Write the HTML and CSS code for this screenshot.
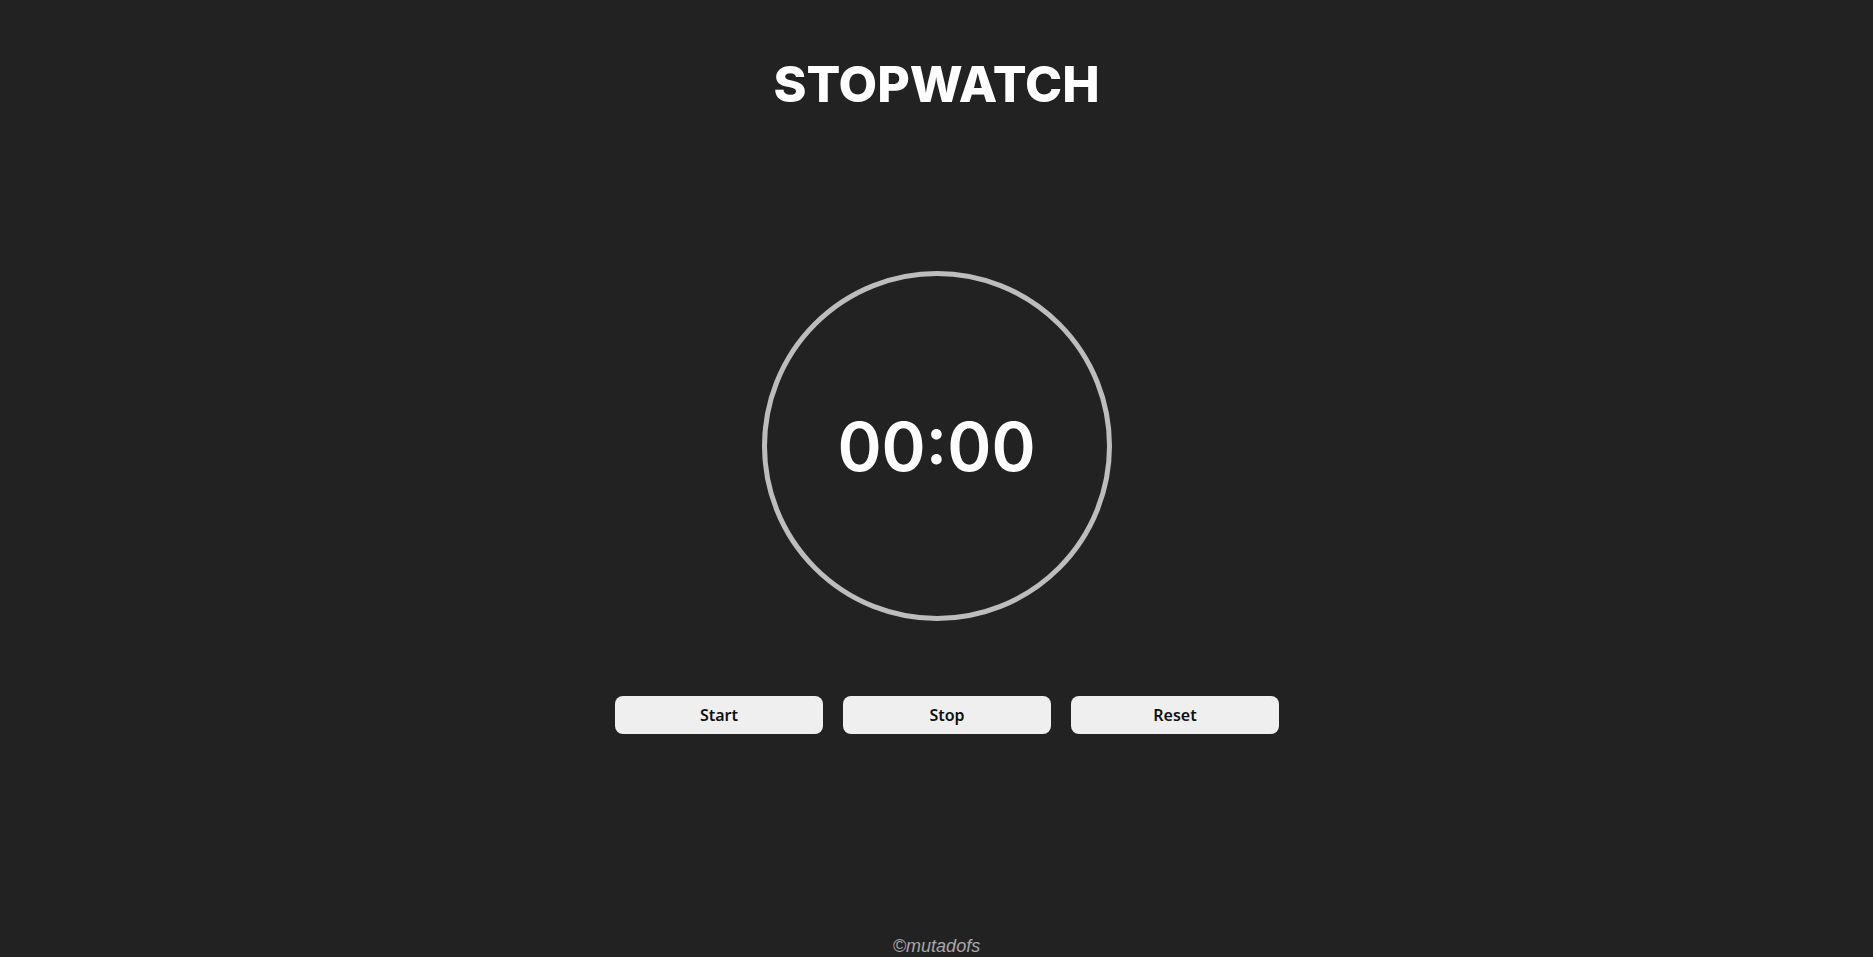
FILE: index.html
```html
<!DOCTYPE html>
<html lang="en">
<head>
<meta charset="utf-8">
<title>Stopwatch</title>
<link rel="stylesheet" href="styles.css">
</head>
<body>
<main class="app">
  <h1 class="title">STOPWATCH</h1>
  <div class="dial"><span class="time">00:00</span></div>
  <div class="controls">
    <button class="btn">Start</button>
    <button class="btn">Stop</button>
    <button class="btn">Reset</button>
  </div>
</main>
<footer class="credit">©mutadofs</footer>
</body>
</html>
```

FILE: styles.css
```css
html, body {
  margin: 0;
  padding: 0;
}
body {
  background: #222222;
  height: 100vh;
  overflow: hidden;
  display: flex;
  flex-direction: column;
  align-items: center;
}
.app {
  display: flex;
  flex-direction: column;
  align-items: center;
}
.title {
  margin: 54px 0 0;
  font-family: Inter, "Noto Sans", sans-serif;
  font-weight: 800;
  font-size: 50px;
  line-height: 60px;
  color: #ffffff;
  letter-spacing: 0;
}
.dial {
  margin-top: 157px;
  width: 350px;
  height: 350px;
  box-sizing: border-box;
  border: 5px solid #bdbdbd;
  border-radius: 50%;
  display: flex;
  align-items: center;
  justify-content: center;
}
.time {
  font-family: Inter, "Noto Sans", sans-serif;
  font-weight: 600;
  font-size: 67px;
  color: #ffffff;
  line-height: 1;
}
.controls {
  margin-top: 75px;
  padding-left: 21px;
  display: flex;
  gap: 20px;
}
.btn {
  width: 208px;
  height: 38px;
  border: none;
  border-radius: 8px;
  background: #efefef;
  color: #111111;
  font-family: "Noto Sans", sans-serif;
  font-weight: 600;
  font-size: 16px;
  padding: 0;
}
.credit {
  margin-top: auto;
  padding-bottom: 2px;
  font-family: "Liberation Sans", Arial, sans-serif;
  font-style: italic;
  font-size: 18px;
  line-height: 18px;
  color: #a8a8a8;
}
```
